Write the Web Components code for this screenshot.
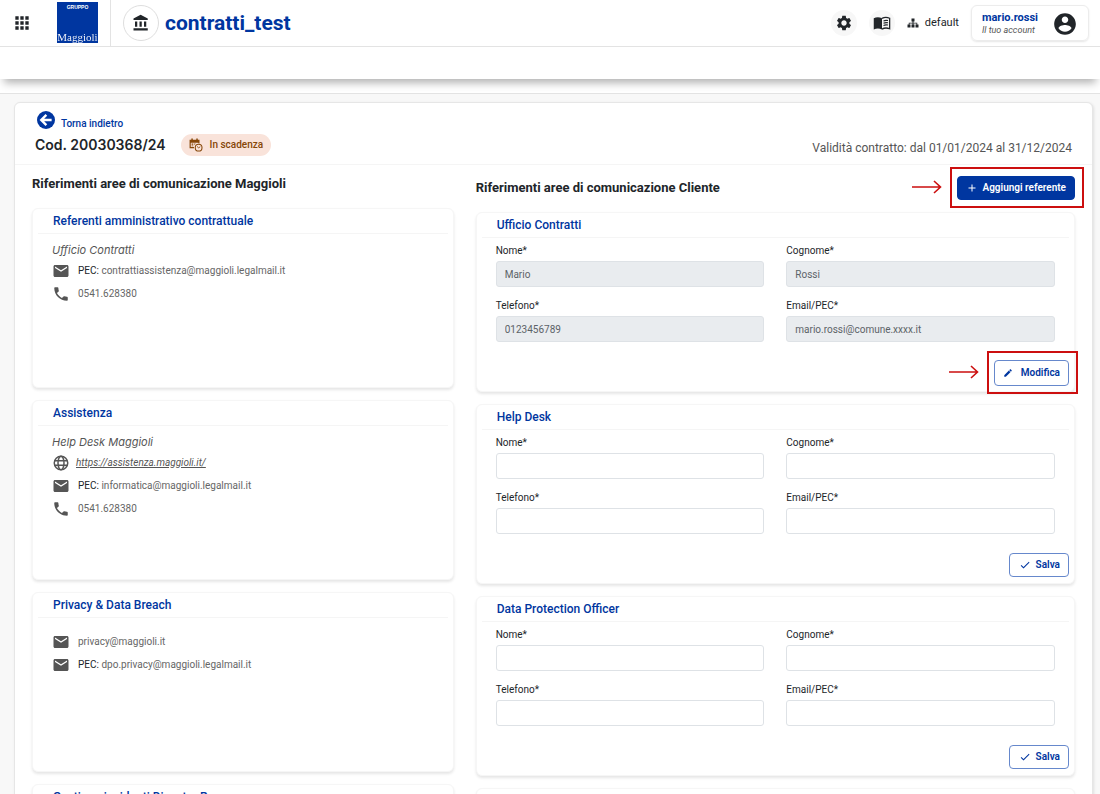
<!DOCTYPE html>
<html lang="it">
<head>
<meta charset="utf-8">
<meta name="viewport" content="width=device-width, initial-scale=1">
<title>contratti_test</title>
<style>
  html { scrollbar-width: none; }
  body {
    margin: 0;
    background: #f8f8f8;
    color: #212529;
    font: 10px/16px Roboto, "Liberation Sans", sans-serif;
    --blue: #0036a0;
    --red: #cc0f0f;
    --ui: Inter, Roboto, "Liberation Sans", sans-serif;
  }
</style>
</head>
<body>
<contracts-page></contracts-page>

<script>
const ICONS = {
  apps: '<path d="M4 8h4V4H4v4zm6 12h4v-4h-4v4zm-6 0h4v-4H4v4zm0-6h4v-4H4v4zm6 0h4v-4h-4v4zm6-10v4h4V4h-4zm-6 4h4V4h-4v4zm6 6h4v-4h-4v4zm0 6h4v-4h-4v4z"/>',
  bank: '<path d="M4 10v7h3v-7H4zm6 0v7h3v-7h-3zM2 22h19v-3H2v3zm14-12v7h3v-7h-3zm-4.500-9L2 6v2h19V6l-9.500-5z"/>',
  gear: '<path d="M19.14 12.94c.04-.3.06-.61.06-.94 0-.32-.02-.64-.07-.94l2.03-1.58c.18-.14.23-.41.12-.61l-1.92-3.32c-.12-.22-.37-.29-.59-.22l-2.39.96c-.5-.38-1.03-.7-1.62-.94l-.36-2.54c-.04-.24-.24-.41-.48-.41h-3.84c-.24 0-.43.17-.47.41l-.36 2.54c-.59.24-1.13.57-1.62.94l-2.39-.96c-.22-.08-.47 0-.59.22L2.740 8.870c-.12.21-.08.47.12.61l2.030 1.580c-.05.3-.09.63-.09.94s.02.64.07.94l-2.030 1.580c-.18.14-.23.41-.12.61l1.920 3.320c.12.22.37.29.59.22l2.390-.96c.5.38 1.030.7 1.620.94l.36 2.540c.05.24.24.41.48.41h3.840c.24 0 .44-.17.47-.41l.36-2.540c.59-.24 1.130-.56 1.620-.94l2.390.96c.22.08.47 0 .59-.22l1.920-3.320c.12-.22.07-.47-.12-.61l-2.010-1.580zM12 15.600c-1.980 0-3.600-1.620-3.600-3.600s1.620-3.600 3.600-3.600 3.600 1.620 3.600 3.600-1.620 3.600-3.600 3.600z"/>',
  book: '<path d="M1 5.500C4.500 3.800 8.500 3.800 12 5.500V20.500C8.500 18.900 4.500 18.900 1 20.500Z"/><path d="M12 5.900c3-1.700 7-1.700 10.200-.2V19.700c-3.200-1.300-7.200-1.300-10.200.5" fill="none" stroke="currentColor" stroke-width="1.700"/><path d="M14 9.200c2-.8 4.200-.8 6-.4M14 12.200c2-.8 4.200-.8 6-.4M14 15.200c2-.8 4.200-.8 6-.4" fill="none" stroke="currentColor" stroke-width="1.400"/>',
  tree: '<path d="M9 3h6v6h-2v2.500h7.500V15H23v6h-6v-6h2v-2h-6v2h2v6H9v-6h2v-2H5v2h2v6H1v-6h2.500v-3.500H11V9H9z"/>',
  user: '<path d="M12 2C6.480 2 2 6.480 2 12s4.480 10 10 10 10-4.480 10-10S17.520 2 12 2zm0 3c1.660 0 3 1.340 3 3s-1.340 3-3 3-3-1.340-3-3 1.340-3 3-3zm0 14.200c-2.500 0-4.710-1.280-6-3.220.03-1.990 4-3.080 6-3.080 1.990 0 5.970 1.090 6 3.080-1.290 1.940-3.500 3.220-6 3.220z"/>',
  back: '<circle cx="12" cy="12" r="12"/><path d="M19.500 12H6M12.500 5.200 5.700 12l6.800 6.800" fill="none" stroke="#fff" stroke-width="3.200"/>',
  due: '<path d="M1 3h3V1h2.500v2h6V1H15v2h3v6.400a7.500 7.500 0 0 0-2-.4V8H3v7.500h5.500a7 7 0 0 0 .2 2H1zM4.500 9.500h2.800v2H4.500zm4.500 0h2.500L9.700 11.500H9zM4.500 12.700h2.800v1.600H4.500z"/><circle cx="16.500" cy="16.500" r="5.800" fill="none" stroke="currentColor" stroke-width="1.800"/><path d="M13.800 14.500l2.700 2.300 2.800-1.800" fill="none" stroke="currentColor" stroke-width="1.500"/>',
  mail: '<path d="M20 4H4c-1.100 0-1.990.9-1.990 2L2 18c0 1.100.9 2 2 2h16c1.100 0 2-.9 2-2V6c0-1.100-.9-2-2-2zm0 4l-8 5-8-5V6l8 5 8-5v2z"/>',
  phone: '<path d="M6.620 10.790c1.440 2.830 3.760 5.140 6.590 6.590l2.200-2.200c.27-.27.67-.36 1.020-.24 1.120.37 2.330.57 3.570.57.55 0 1 .45 1 1V20c0 .55-.45 1-1 1-9.390 0-17-7.610-17-17 0-.55.45-1 1-1h3.500c.55 0 1 .45 1 1 0 1.250.2 2.450.57 3.570.11.35.03.74-.25 1.020l-2.200 2.200z"/>',
  web: '<g fill="none" stroke="currentColor" stroke-width="2"><circle cx="12" cy="12" r="9"/><ellipse cx="12" cy="12" rx="4" ry="9"/><path d="M3.500 9h17M3.500 15h17"/></g>',
  plus: '<path d="M19 13h-6v6h-2v-6H5v-2h6V5h2v6h6v2z"/>',
  edit: '<path d="M3 17.250V21h3.750L17.810 9.940l-3.750-3.750L3 17.250zM20.710 7.040c.39-.39.39-1.020 0-1.410l-2.340-2.340c-.39-.39-1.020-.39-1.410 0l-1.830 1.830 3.750 3.750 1.830-1.830z"/>',
  check: '<path d="M9 16.170L4.830 12l-1.420 1.410L9 19 21 7l-1.410-1.410z"/>'
};

const define = (name, render) => customElements.define(name, class extends HTMLElement {
  connectedCallback() {
    if (this.shadowRoot) return;
    const root = this.attachShadow({ mode: 'open' });
    const template = document.createElement('template');
    template.innerHTML = render(this);
    root.append(template.content.cloneNode(true));
  }
});
const attr = (el, name, fallback = '') => el.getAttribute(name) ?? fallback;

define('ui-icon', el => `
  <style>
    :host { display: block; flex: none; width: var(--size, 18px); height: var(--size, 18px); }
    svg { display: block; width: 100%; height: 100%; }
  </style>
  <svg viewBox="0 0 24 24" fill="currentColor" aria-hidden="true">${ICONS[attr(el, 'name')]}</svg>`);

define('ui-button', el => `
  <style>
    :host { display: block; }
    button {
      display: flex; align-items: center; gap: 8px; box-sizing: border-box;
      height: var(--height, 24px); padding: 0 8px; border: 1px solid #6688cc; border-radius: 4px;
      background: #fff; color: var(--blue); font: 600 10px/16px Roboto, sans-serif; cursor: pointer;
    }
    :host([primary]) button { background: var(--blue); border-color: var(--blue); color: #fff; }
    ui-icon { --size: 10px; }
    :host([icon="check"]) ui-icon, :host([icon="plus"]) ui-icon { --size: 12px; }
    :host([icon="check"]) button { gap: 5px; padding: 0 8px 0 9px; }
    :host([icon="plus"]) button { gap: 4px; }
  </style>
  <button type="button"><ui-icon name="${attr(el, 'icon')}"></ui-icon><slot></slot></button>`);

/* Red frame with an arrow that points at the slotted control. */
define('call-out', () => `
  <style>
    :host { display: block; position: relative; }
    .frame { position: absolute; inset: -9px -9px -8px -7px; border: 2px solid var(--red); pointer-events: none; }
    svg { position: absolute; right: 100%; top: 50%; margin: -8px 14px 0 0; width: 32px; height: 14px; }
  </style>
  <slot></slot>
  <div class="frame"></div>
  <svg viewBox="0 0 32 14" fill="none" stroke="#cc0f0f" stroke-width="1.600" aria-hidden="true"><path d="M1 7h28M23 1l6.500 6-6.500 6"/></svg>`);

define('app-header', () => `
  <style>
    :host { display: block; background: #fff; }
    header { display: flex; align-items: center; height: 46px; border-bottom: 1px solid #e3e3e3; padding: 0 11px 0 12px; }
    button { display: grid; place-items: center; padding: 0; border: 0; background: none; color: #212529; }
    .apps { --size: 20px; }
    .brand {
      display: flex; flex-direction: column; align-items: center; align-self: stretch; box-sizing: border-box;
      margin-left: 25px; padding: 2px 12px 0 0; border-right: 1px solid #e3e3e3;
    }
    .logo {
      display: flex; flex-direction: column; align-items: center; justify-content: space-between;
      width: 41px; height: 41px; background: var(--blue); color: #fff;
    }
    .logo small { font: 700 5px/10px "Liberation Sans", sans-serif; }
    .logo b {
      font: 400 11px/12px "Liberation Serif", serif; height: 12px; padding-bottom: 4px; margin-bottom: -4px;
      background: linear-gradient(#fff 12px, #0036a0 12px); background-clip: text; color: transparent;
    }
    .seal {
      display: grid; place-items: center; width: 34px; height: 34px; margin-left: 12px;
      border: 1px solid #dedede; border-radius: 50%; --size: 18px;
    }
    h1 { margin: 0 auto 0 6px; font: 700 21px/24px Roboto, sans-serif; color: var(--blue); }
    .round { width: 26px; height: 26px; border-radius: 50%; background: #f7f7f7; margin-right: 12px; --size: 18px; }
    .tenant { display: flex; align-items: center; gap: 6px; margin-right: 12px; --size: 12px; font: 11px/16px Roboto, sans-serif; }
    .account {
      display: flex; align-items: center; gap: 14px; box-sizing: border-box; height: 36px; padding: 2px 10px 0; text-align: left;
      border: 1px solid #ececec; border-radius: 6px; box-shadow: 0 1px 2px #0000001a; --size: 26px;
    }
    .account b { display: block; font: 700 11px/12px Roboto, sans-serif; color: var(--blue); }
    .account i { display: block; font: italic 9px/12px Roboto, sans-serif; color: #555; }
    .band { position: relative; height: 32px; background: #fff; box-shadow: 0 8px 8px -4px #0000004d; }
    .rule { height: 14px; border-bottom: 1px solid #e3e3e3; }
  </style>
  <header>
    <button class="apps" aria-label="Applicazioni"><ui-icon name="apps"></ui-icon></button>
    <div class="brand"><div class="logo"><small>GRUPPO</small><b>Maggioli</b></div></div>
    <div class="seal"><ui-icon name="bank"></ui-icon></div>
    <h1>contratti_test</h1>
    <button class="round" aria-label="Impostazioni"><ui-icon name="gear"></ui-icon></button>
    <button class="round" aria-label="Guida"><ui-icon name="book"></ui-icon></button>
    <button class="tenant"><ui-icon name="tree"></ui-icon>default</button>
    <button class="account"><span><b>mario.rossi</b><i>Il tuo account</i></span><ui-icon name="user"></ui-icon></button>
  </header>
  <div class="band"></div>
  <div class="rule"></div>`);

define('info-card', el => `
  <style>
    :host {
      display: block; box-sizing: border-box; height: 180px; padding: 0 5px; background: #fff;
      border: 1px solid #f6f6f6; border-radius: 6px; box-shadow: 0 2px 3px #0000001a;
    }
    h3 {
      margin: 0; padding: 4px 15px 4px; border-bottom: 1px solid #f5f5f5;
      font: 500 12px/16px Roboto, sans-serif; color: var(--blue);
    }
  </style>
  <h3>${attr(el, 'heading')}</h3>
  <slot></slot>`);

define('contact-list', el => `
  <style>
    :host { display: block; padding: 8px 14px 0; color: #555; }
    .note { display: block; font: italic 11px/16px var(--ui); margin-bottom: 1px; }
    :host(:not([note])) { padding-top: 12px; }
  </style>
  ${attr(el, 'note') && `<em class="note">${attr(el, 'note')}</em>`}
  <slot></slot>`);

define('contact-row', el => `
  <style>
    :host { display: flex; align-items: center; gap: 8px; height: 23px; color: #666; }
    ui-icon { color: #555; }
    b { font-weight: 400; color: #212529; }
    a { color: #555; font-style: italic; }
    :host([icon="web"]) { gap: 6px; }
  </style>
  <ui-icon name="${attr(el, 'icon')}"></ui-icon>
  ${el.hasAttribute('href')
    ? `<a href="${attr(el, 'href')}"><slot></slot></a>`
    : `<span>${el.hasAttribute('pec') ? '<b>PEC:</b> ' : ''}<slot></slot></span>`}`);

define('contact-form', el => {
  const field = (id, label) => `
    <div><label for="${id}">${label}*</label>
    <input id="${id}" value="${attr(el, id)}" ${el.hasAttribute('locked') ? 'disabled' : ''}></div>`;
  return `
  <style>
    :host { display: block; }
    .fields { display: grid; grid-template-columns: 1fr 1fr; gap: 11px 22px; padding: 5px 14px 0; }
    label { display: block; line-height: 16px; margin-bottom: 2px; }
    input {
      display: block; box-sizing: border-box; width: 100%; height: 26px; padding: 0 8px;
      border: 1px solid #dee2e6; border-radius: 3px; background: #fff; color: #5c6368; font: 10px/16px Roboto, sans-serif;
    }
    input:disabled { background: #e9ecef; }
    .actions { display: flex; justify-content: flex-end; padding-top: 18px; }
    :host(:not([locked])) .actions { padding-top: 19px; }
    :host([locked]) { --height: 26px; }
  </style>
  <form>
    <div class="fields">
      ${field('nome', 'Nome')}${field('cognome', 'Cognome')}
      ${field('telefono', 'Telefono')}${field('email', 'Email/PEC')}
    </div>
    <div class="actions"><slot></slot></div>
  </form>`;
});

define('contract-summary', () => `
  <style>
    :host { display: flex; align-items: flex-end; justify-content: space-between; padding: 8px 20px 8px; border-bottom: 1px solid #f5f5f5; }
    .back { display: flex; align-items: flex-end; gap: 6px; margin-left: 2px; color: var(--blue); text-decoration: none; font-weight: 500; line-height: 10px; width: max-content; }
    .back { --size: 18px; }
    .line { display: flex; align-items: center; gap: 15px; margin-top: 5px; }
    h2 { margin: 0; font: 600 14px/20px var(--ui); }
    .badge {
      display: flex; align-items: center; gap: 7px; height: 22px; padding: 0 8px; border-radius: 11px;
      background: #f9e3da; color: #864607; font-weight: 500; --size: 14px;
    }
    p { margin: 0; font: 12px/16px Roboto, sans-serif; color: #555; }
  </style>
  <div>
    <a class="back" href="#"><ui-icon name="back"></ui-icon>Torna indietro</a>
    <div class="line"><h2>Cod. 20030368/24</h2><span class="badge"><ui-icon name="due"></ui-icon>In scadenza</span></div>
  </div>
  <p>Validità contratto: dal 01/01/2024 al 31/12/2024</p>`);

define('contact-column', el => `
  <style>
    :host { display: flex; flex-direction: column; gap: 12px; }
    .top { display: flex; align-items: center; justify-content: space-between; height: 24px; }
    h2 { margin: 0; font: 700 13px/20px Roboto, sans-serif; }
  </style>
  <div class="top"><h2>${attr(el, 'heading')}</h2><slot name="action"></slot></div>
  <slot></slot>`);

define('contracts-page', () => `
  <style>
    :host { display: block; }
    main { margin: 8px 7px 24px 14px; background: #fff; border: 1px solid #e6e6e6; border-radius: 6px; box-shadow: 1px 1px 3px #0000001a; }
    .columns { display: grid; grid-template-columns: 19fr 27fr; gap: 22px; padding: 7px 17px 24px; }
    .right { padding-top: 4px; }
  </style>
  <app-header></app-header>
  <main>
    <contract-summary></contract-summary>
    <div class="columns">
      <contact-column heading="Riferimenti aree di comunicazione Maggioli">
        <info-card heading="Referenti amministrativo contrattuale">
          <contact-list note="Ufficio Contratti">
            <contact-row icon="mail" pec>contrattiassistenza@maggioli.legalmail.it</contact-row>
            <contact-row icon="phone">0541.628380</contact-row>
          </contact-list>
        </info-card>
        <info-card heading="Assistenza">
          <contact-list note="Help Desk Maggioli">
            <contact-row icon="web" href="https://assistenza.maggioli.it/">https://assistenza.maggioli.it/</contact-row>
            <contact-row icon="mail" pec>informatica@maggioli.legalmail.it</contact-row>
            <contact-row icon="phone">0541.628380</contact-row>
          </contact-list>
        </info-card>
        <info-card heading="Privacy &amp; Data Breach">
          <contact-list>
            <contact-row icon="mail">privacy@maggioli.it</contact-row>
            <contact-row icon="mail" pec>dpo.privacy@maggioli.legalmail.it</contact-row>
          </contact-list>
        </info-card>
        <info-card heading="Gestione incidenti Disaster Recovery"></info-card>
      </contact-column>
      <contact-column class="right" heading="Riferimenti aree di comunicazione Cliente">
        <call-out slot="action"><ui-button primary icon="plus">Aggiungi referente</ui-button></call-out>
        <info-card heading="Ufficio Contratti">
          <contact-form locked nome="Mario" cognome="Rossi" telefono="0123456789" email="mario.rossi@comune.xxxx.it">
            <call-out><ui-button icon="edit">Modifica</ui-button></call-out>
          </contact-form>
        </info-card>
        <info-card heading="Help Desk">
          <contact-form><ui-button icon="check">Salva</ui-button></contact-form>
        </info-card>
        <info-card heading="Data Protection Officer">
          <contact-form><ui-button icon="check">Salva</ui-button></contact-form>
        </info-card>
        <info-card heading=""></info-card>
      </contact-column>
    </div>
  </main>`);
</script>
</body>
</html>
